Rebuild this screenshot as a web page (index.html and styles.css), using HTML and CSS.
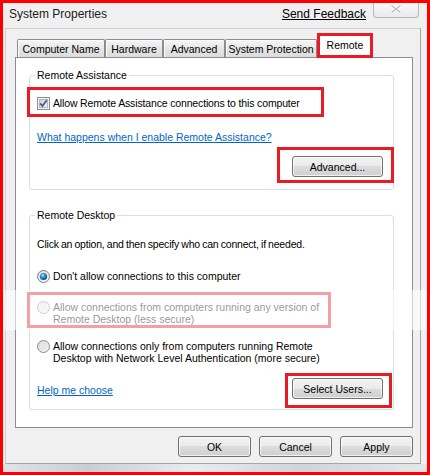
FILE: index.html
```html
<!DOCTYPE html>
<html lang="en">
<head>
  <meta charset="UTF-8">
  <title>System Properties</title>
  <link rel="stylesheet" href="styles.css">
</head>
<body>

  <div class="frame">
    <div class="titlebar">
      <span class="title">System Properties</span>
      <a class="feedback" href="#">Send Feedback</a>
      <div class="close">
        <svg width="12" height="8" viewBox="0 0 12 8">
          <path d="M1.5 0.5 L10.5 7.5 M10.5 0.5 L1.5 7.5" stroke="#ffffff" stroke-width="3.2" fill="none"/>
          <path d="M1.5 0.5 L10.5 7.5 M10.5 0.5 L1.5 7.5" stroke="#b9bcc0" stroke-width="1.4" fill="none"/>
        </svg>
      </div>
    </div>

    <div class="client">
      <div class="tabs">
        <div class="tab t-name">Computer Name</div>
        <div class="tab t-hw">Hardware</div>
        <div class="tab t-adv">Advanced</div>
        <div class="tab t-sp">System Protection</div>
        <div class="tab active">Remote</div>
      </div>

      <div class="panel">
        <fieldset class="group group-ra">
          <legend>Remote Assistance</legend>

          <div class="mark check-row">
            <svg class="box-icon" width="13" height="13" viewBox="0 0 13 13">
              <defs>
                <linearGradient id="cb" x1="0" y1="0" x2="1" y2="1">
                  <stop offset="0" stop-color="#cbcfd5"/>
                  <stop offset="1" stop-color="#f6f6f6"/>
                </linearGradient>
              </defs>
              <rect x="0.5" y="0.5" width="12" height="12" fill="#f4f4f4" stroke="#8e8f8f"/>
              <rect x="2.5" y="2.5" width="8" height="8" fill="url(#cb)" stroke="#b3b8bd"/>
              <path d="M3.2 6.4 L5.4 9 L9.8 3.2" stroke="#4a5f8f" stroke-width="1.8" fill="none"/>
            </svg>
            <span>Allow Remote Assistance connections to this computer</span>
          </div>

          <a class="link ra-link" href="#">What happens when I enable Remote Assistance?</a>

          <div class="mark btn-box adv-box">
            <button class="btn">Advanced...</button>
          </div>
        </fieldset>

        <fieldset class="group group-rd">
          <legend>Remote Desktop</legend>

          <p class="hint">Click an option, and then specify who can connect, if needed.</p>

          <div class="option opt-one">
            <svg class="radio" width="13" height="13" viewBox="0 0 13 13">
              <defs>
                <linearGradient id="rb" x1="0" y1="0" x2="1" y2="1">
                  <stop offset="0" stop-color="#d4d6d9"/>
                  <stop offset="1" stop-color="#fbfbfb"/>
                </linearGradient>
                <radialGradient id="dot" cx="0.4" cy="0.35" r="0.7">
                  <stop offset="0" stop-color="#a9e3ff"/>
                  <stop offset="0.45" stop-color="#2a8ad4"/>
                  <stop offset="1" stop-color="#0d3c74"/>
                </radialGradient>
              </defs>
              <circle cx="6.5" cy="6.5" r="6" fill="url(#rb)" stroke="#7d8084"/>
              <circle cx="6.5" cy="6.5" r="3.6" fill="url(#dot)"/>
            </svg>
            <span>Don't allow connections to this computer</span>
          </div>

          <div class="mark option opt-two">
            <svg class="radio" width="13" height="13" viewBox="0 0 13 13">
              <circle cx="6.5" cy="6.5" r="6" fill="url(#rb)" stroke="#8a8d90"/>
              <circle cx="6.5" cy="6.5" r="4" fill="#e4e6e8"/>
            </svg>
            <span>Allow connections from computers running any version of<br>Remote Desktop (less secure)</span>
          </div>

          <div class="option opt-three">
            <svg class="radio" width="13" height="13" viewBox="0 0 13 13">
              <circle cx="6.5" cy="6.5" r="6" fill="url(#rb)" stroke="#8a8d90"/>
              <circle cx="6.5" cy="6.5" r="4" fill="#e4e6e8"/>
            </svg>
            <span>Allow connections only from computers running Remote<br>Desktop with Network Level Authentication (more secure)</span>
          </div>

          <div class="rd-foot">
            <a class="link" href="#">Help me choose</a>
            <div class="mark btn-box sel-box">
              <button class="btn">Select Users...</button>
            </div>
          </div>
        </fieldset>
      </div>

      <div class="actions">
        <button class="btn wide">OK</button>
        <button class="btn wide">Cancel</button>
        <button class="btn wide">Apply</button>
      </div>
    </div>

    <div class="bottom-edge"></div>

    <!-- faded band from the original capture -->
    <div class="glare"></div>
  </div>

</body>
</html>
```

FILE: styles.css
```css
body {
  margin: 0;
  font-family: "Liberation Sans", Arial, sans-serif;
  font-size: 10.5px;
  color: #000;
}

.frame {
  position: relative;
  width: 430px;
  height: 475px;
  box-sizing: border-box;
  border: 3px solid #ff0000;
  background: #f0f0f0;
  display: flex;
  flex-direction: column;
  overflow: hidden;
}

/* title bar */
.titlebar {
  height: 25px;
  flex-shrink: 0;
  display: flex;
  align-items: flex-start;
  padding-left: 6px;
}

.title {
  font-size: 12px;
  line-height: 16px;
  margin-top: 3px;
  color: #1b1b1b;
}

.feedback {
  margin-left: auto;
  font-size: 12px;
  line-height: 16px;
  margin-top: 3px;
  color: #000;
  text-decoration: underline;
}

.close {
  width: 46px;
  height: 15px;
  margin-left: 7px;
  margin-right: 8px;
  box-sizing: border-box;
  border: 1px solid #b4b6b9;
  border-top: none;
  border-radius: 0 0 4px 4px;
  background: linear-gradient(#f8f8f8, #e9eaeb);
  display: flex;
  align-items: center;
  justify-content: center;
  padding-bottom: 2px;
}

/* client area */
.client {
  flex: 1;
  margin: 0 6px 0 2px;
  border: 1px solid #cfd1d4;
  border-right-color: #a3a5a8;
  border-bottom-color: #a3a5a8;
  padding: 4px 7px 6px 9px;
  display: flex;
  flex-direction: column;
}

.tabs {
  height: 24px;
  display: flex;
  align-items: flex-end;
  padding-left: 2px;
}

.tab {
  height: 18px;
  box-sizing: border-box;
  border: 1px solid #898c95;
  border-bottom: none;
  border-radius: 2px 2px 0 0;
  background: linear-gradient(#f6f6f6, #e6e6e6 50%, #dcdcdc);
  box-shadow: inset 1px 1px 0 #fcfcfc;
  display: flex;
  align-items: center;
  justify-content: center;
  white-space: nowrap;
}

.t-name { width: 88px; }
.t-hw { width: 58px; }
.t-adv { width: 62px; }
.t-sp { width: 92px; }

.tab.active {
  position: relative;
  z-index: 1;
  width: 56px;
  height: 25px;
  margin-bottom: -1px;
  border: 3px solid #e81c24;
  border-radius: 0;
  background: #fff;
  box-shadow: none;
  align-items: flex-start;
  padding-top: 3px;
}

.panel {
  height: 371px;
  box-sizing: border-box;
  border: 1px solid #898c95;
  background: #fff;
}

/* group boxes */
.group {
  margin: 0 18px 0 13px;
  padding: 0;
  min-width: 0;
  border: 1px solid #d5dfe5;
  border-radius: 3px;
}

.group legend {
  margin-left: 5px;
  padding: 0 2px;
  line-height: 13px;
}

.group-ra { margin-top: 11px; }
.group-rd { margin-top: 19px; }

.mark {
  box-sizing: border-box;
  border: 3px solid #e81c24;
}

.check-row {
  width: 297px;
  height: 30px;
  margin: 5px 0 0 -3px;
  padding: 2px 0 0 7px;
  display: flex;
  align-items: center;
  letter-spacing: -0.15px;
}

.box-icon,
.radio {
  flex-shrink: 0;
  margin-right: 3px;
}

.link {
  display: block;
  width: fit-content;
  color: #0066cc;
  text-decoration: underline;
  line-height: 13px;
}

.ra-link {
  margin: 14px 0 0 7px;
}

.btn-box {
  display: flex;
  margin-left: auto;
}

.adv-box {
  width: 117px;
  height: 36px;
  margin: 3px -1px 6px auto;
  padding: 6px 8px 3px 12px;
}

.btn {
  width: 91px;
  height: 21px;
  box-sizing: border-box;
  border: 1px solid #707070;
  border-radius: 3px;
  background: linear-gradient(#f2f2f2, #ebebeb 50%, #dddddd 50%, #cfcfcf);
  box-shadow: inset 0 0 0 1px rgba(255, 255, 255, 0.7);
  font-family: "Liberation Sans", Arial, sans-serif;
  font-size: 10.5px;
  color: #000;
  padding: 0;
}

.hint {
  margin: 16px 0 0 7px;
  line-height: 13px;
  letter-spacing: -0.2px;
  word-spacing: -0.5px;
}

.option {
  display: flex;
  align-items: flex-start;
  line-height: 12px;
  margin-left: 7px;
  white-space: nowrap;
}

.option .radio {
  margin-right: 3px;
}

.opt-one {
  margin-top: 19px;
  height: 13px;
  align-items: center;
  line-height: 13px;
}

.opt-two {
  width: 304px;
  height: 36px;
  margin: 9px 0 0 -3px;
  padding: 6px 0 0 7px;
}

.opt-three {
  margin-top: 12px;
}

.rd-foot {
  display: flex;
  align-items: center;
  margin: 9px 0 1px 7px;
}

.sel-box {
  width: 107px;
  height: 35px;
  margin-right: 1px;
  padding: 2px 6px 6px 4px;
}

/* dialog buttons */
.actions {
  display: flex;
  justify-content: flex-end;
  gap: 8px;
  margin-top: 8px;
}

.btn.wide {
  width: 73px;
}

.bottom-edge {
  height: 8px;
  flex-shrink: 0;
  background: linear-gradient(90deg, #dfe3e8, #c9ced6 20%, #e9ecef 45%, #cfd4da 70%, #e4e7ea);
}

.glare {
  position: absolute;
  left: -3px;
  right: -3px;
  top: 287px;
  height: 40px;
  background: rgba(255, 255, 255, 0.58);
  pointer-events: none;
}
```
